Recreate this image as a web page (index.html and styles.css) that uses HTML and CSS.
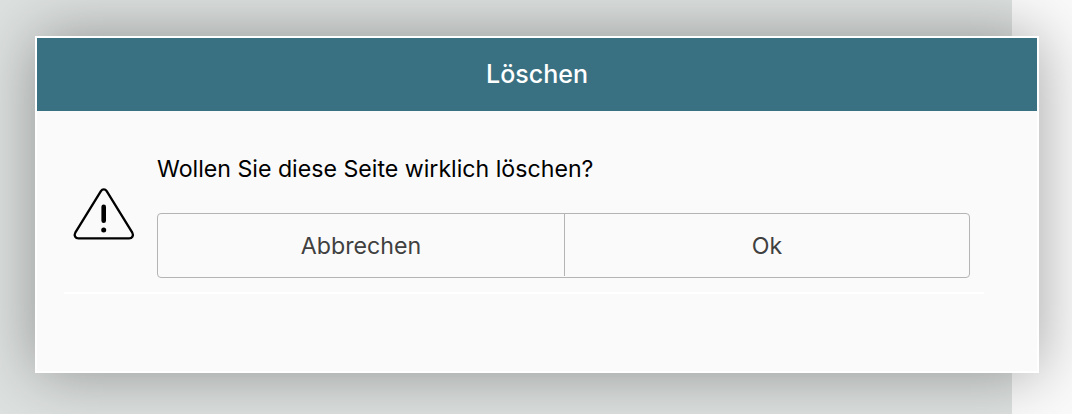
FILE: index.html
```html
<!DOCTYPE html>
<html lang="de">
<head>
<meta charset="utf-8">
<title>Löschen</title>
<link rel="stylesheet" href="styles.css">
</head>
<body>
<main class="page">
  <section class="dialog" role="alertdialog" aria-labelledby="title">
    <header class="dialog-header" id="title"><span class="title-text">Löschen</span></header>
    <div class="dialog-body">
      <svg class="warning" viewBox="0 0 64 56" fill="none" stroke="#000">
        <path d="M28.9 5.1 3.3 46.7C1.7 49.5 3.4 52.3 6.5 52.3H57.1C60.2 52.3 61.9 49.5 60.3 46.7L34.7 5.1C33.2 2.8 30.4 2.8 28.9 5.1Z" stroke-width="2.3"/>
        <path d="M31.7 20.7V34.7" stroke-width="4.6" stroke-linecap="round"/>
        <circle cx="31.7" cy="43.9" r="2.5" fill="#000" stroke="none"/>
      </svg>
      <div class="content">
        <p class="message"><span class="message-text">Wollen Sie diese Seite wirklich löschen?</span></p>
        <div class="buttons">
          <button class="button">Abbrechen</button>
          <button class="button">Ok</button>
        </div>
      </div>
    </div>
  </section>
</main>
</body>
</html>
```
FILE: styles.css
```css
* { box-sizing: border-box; }
body {
  margin: 0;
  font-family: Inter, "Liberation Sans", sans-serif;
}
.page {
  height: 414px;
  padding: 36px 33px 0 35px;
  overflow: hidden;
  background: linear-gradient(90deg, #dde1df 1012px, #fafafa 1012px);
}
.dialog {
  height: 337px;
  border: 2px solid #fff;
  background: #fafafa;
  box-shadow: 0 0 60px rgba(0, 0, 0, .35);
}
.dialog-header {
  height: 73px;
  line-height: 73px;
  text-align: center;
  background: #3a7182;
  color: #fff;
  font-size: 25px;
  font-weight: 450;
}
.dialog-body {
  display: flex;
  height: 183px;
  margin: 0 53px 0 27px;
  padding: 0 14px 0 8px;
  border-bottom: 2px solid #fff;
}
.warning {
  flex: none;
  width: 64px;
  height: 56px;
  margin-top: 75px;
}
.content {
  flex: 1;
  margin-left: 21px;
  padding-top: 42px;
}
.message {
  margin: 0;
  height: 60px;
  line-height: 32px;
  font-size: 23.17px;
  color: #000;
}
.buttons {
  display: grid;
  grid-template-columns: 406px 1fr;
  height: 65px;
  border: 1px solid #b4b4b4;
  border-radius: 4px;
}
.button {
  height: 62px;
  padding: 2px 0 0;
  border: 0;
  background: none;
  font: 23.2px Inter, "Liberation Sans", sans-serif;
  color: #404040;
}
.button + .button { border-left: 1px solid #b4b4b4; }
```
